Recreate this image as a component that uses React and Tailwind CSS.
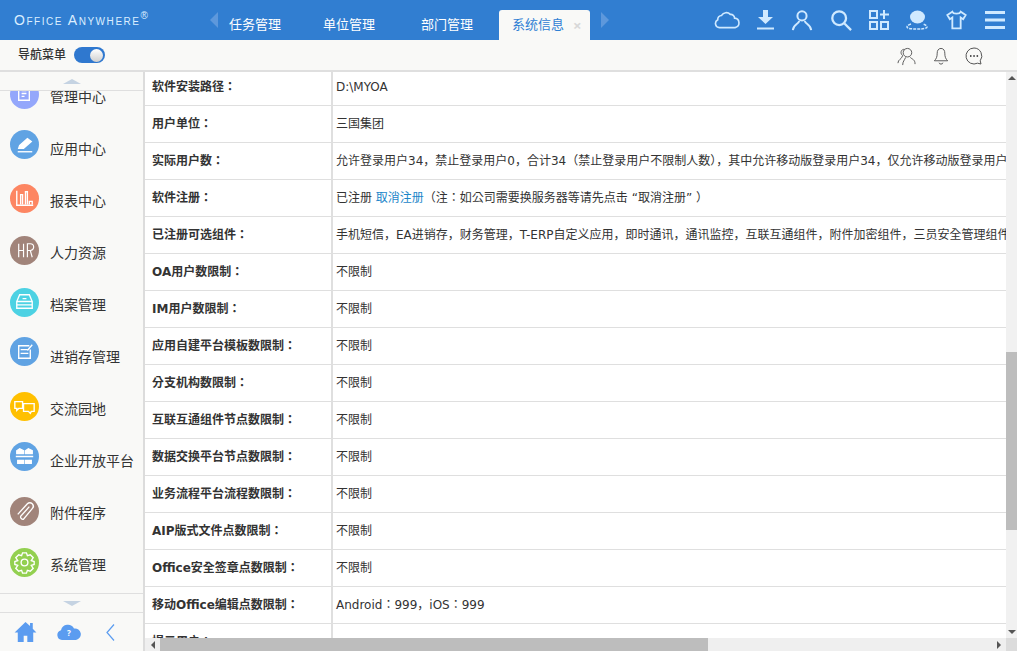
import React from "react";

const ICON = "#cfe9ff";

const rows = [
  ["软件安装路径：", "D:\\MYOA"],
  ["用户单位：", "三国集团"],
  ["实际用户数：", "允许登录用户34，禁止登录用户0，合计34（禁止登录用户不限制人数），其中允许移动版登录用户34，仅允许移动版登录用户0"],
  ["软件注册：", null],
  ["已注册可选组件：", "手机短信，EA进销存，财务管理，T-ERP自定义应用，即时通讯，通讯监控，互联互通组件，附件加密组件，三员安全管理组件"],
  ["OA用户数限制：", "不限制"],
  ["IM用户数限制：", "不限制"],
  ["应用自建平台模板数限制：", "不限制"],
  ["分支机构数限制：", "不限制"],
  ["互联互通组件节点数限制：", "不限制"],
  ["数据交换平台节点数限制：", "不限制"],
  ["业务流程平台流程数限制：", "不限制"],
  ["AIP版式文件点数限制：", "不限制"],
  ["Office安全签章点数限制：", "不限制"],
  ["移动Office编辑点数限制：", "Android：999，iOS：999"],
  ["提示用户：", ""],
];

function TopIcon({ children, className, width = "2" }) {
  return (
    <svg viewBox="0 0 24 24" fill="none" stroke={ICON} strokeWidth={width} className={className}>
      {children}
    </svg>
  );
}

const menu = [
  {
    name: "管理中心",
    bg: "bg-[#94a7fb]",
    shift: "mb-[3px]",
    icon: (
      <>
        <path d="M9 7h11v14H9z" />
        <path d="M12 11h5M12 14h5M12 17h3" />
      </>
    ),
  },
  {
    name: "应用中心",
    bg: "bg-[#60a3e3]",
    shift: "mb-[8px]",
    icon: (
      <>
        <path d="M10 16l8-7 4 3-8 7H9z" fill="#fff" />
        <path d="M8 22.500h15" />
      </>
    ),
  },
  {
    name: "报表中心",
    bg: "bg-[#fd8662]",
    shift: "mb-[3px]",
    icon: <path d="M7 7v15h17M11 21V11h2v10M16 21V8h2v13M20 21v-3h3v3" />,
  },
  {
    name: "人力资源",
    bg: "bg-[#a1847a]",
    shift: "mb-[4px]",
    icon: <path d="M9 8v14M14 8v14M9 15h5M18 22V8h3a3 3 0 0 1 0 7h-3M21 15l2 7" strokeWidth="1.200" />,
  },
  {
    name: "档案管理",
    bg: "bg-[#4dd2e3]",
    shift: "mb-[3px]",
    icon: (
      <>
        <path d="M10 7h10l3 7v7H7v-7z" />
        <path d="M7 14h16M7 17.500h16M13 11h4" />
      </>
    ),
  },
  {
    name: "进销存管理",
    bg: "bg-[#60a3e3]",
    shift: "mb-[10px]",
    icon: <path d="M20 9H9v13h12v-9M11 13h7M11 17h8M18 14l5-6" />,
  },
  {
    name: "交流园地",
    bg: "bg-[#ffc000]",
    shift: "mb-[4px]",
    icon: (
      <>
        <path d="M5 10h8v7H9l-2 2v-2H5z" />
        <path d="M14 12h11v8h-3l-1 2-2-2h-5z" />
      </>
    ),
  },
  {
    name: "企业开放平台",
    bg: "bg-[#60a3e3]",
    shift: "mb-[8px]",
    icon: <path d="M7 9l3-2 4 2v3H7zM16 9l3-2 4 2v3h-7zM6 15h18M8 19h6v3H8zM16 19h6v3h-6z" fill="#fff" />,
  },
  {
    name: "附件程序",
    bg: "bg-[#a1847a]",
    shift: "mb-[2px]",
    icon: <path d="M20 10l-9 10a2.500 2.500 0 0 0 3 3l9-11a3.500 3.500 0 0 0-5-5L8 18" />,
  },
  {
    name: "系统管理",
    bg: "bg-[#93d050]",
    shift: "mb-[4px]",
    icon: (
      <>
        <circle cx="15" cy="15" r="3.500" />
        <path d="M13 5h4l1 3 3-1 3 3-2 3 3 1v3l-3 1 2 3-3 3-3-1-1 3h-4l-1-3-3 1-3-3 2-3-3-1v-3l3-1-2-3 3-3 3 1z" />
      </>
    ),
  },
];

export default function App() {
  return (
    <div className="w-[1017px] h-[651px] overflow-hidden flex flex-col bg-white text-[#333] font-['Noto_Sans','Noto_Sans_CJK_SC',sans-serif]">
      {/* top bar */}
      <header className="h-[40px] shrink-0 bg-[#317ed1] flex items-end text-white">
        <div className="w-[210px] shrink-0 h-full pl-[14px] pt-[10px] flex items-start text-[14px] leading-[20px] tracking-[1.550px] [font-variant:small-caps] text-[#dbeeff] font-['Liberation_Sans',sans-serif]">
          Office Anywhere<span className="text-[10px] leading-[12px]">®</span>
        </div>
        <div className="h-full flex items-center">
          <div className="w-0 h-0 border-y-[8px] border-y-transparent border-r-[8px] border-r-[#5d98dc]" />
        </div>
        <nav className="flex items-end h-full text-[13px]">
          <a className="w-[105px] h-[30px] pl-[11px] flex items-center">任务管理</a>
          <a className="w-[98px] h-[30px] flex items-center">单位管理</a>
          <a className="w-[78px] h-[30px] flex items-center">部门管理</a>
          <a className="w-[91px] h-[30px] pl-[13px] flex items-center bg-[#f9f9f7] rounded-t-[3px] text-[#2f80d4]">
            系统信息
            <span className="ml-[9px] text-[#d8d8d8] font-bold text-[15px] leading-[15px]">×</span>
          </a>
        </nav>
        <div className="h-full flex items-center ml-[11px]">
          <div className="w-0 h-0 border-y-[8px] border-y-transparent border-l-[8px] border-l-[#5d98dc]" />
        </div>
        <div className="flex-1 h-full flex items-center justify-end pr-[12px] gap-[17px]">
          <TopIcon className="w-[26px] h-[26px]" width="1.500">
            <path d="M5 19a3.800 3.800 0 0 1-1.500-7.200 3.500 3.500 0 0 1 3.500-4 5 5 0 0 1 8-1 3.500 3.500 0 0 1 4 3.500 4.400 4.400 0 0 1 .5 8.700z" />
          </TopIcon>
          <svg viewBox="0 0 17 20" fill={ICON} className="w-[17px] h-[20px]">
            <path d="M6 0h5v7h5l-7.500 7L1 7h5zM0 17.500h17V19.500H0z" />
          </svg>
          <TopIcon className="w-[22px] h-[22px]" width="2.200">
            <circle cx="12" cy="7.500" r="5" />
            <path d="M9 13c-1 4-6 3-7 10M15 13c1 4 6 3 7 10" />
          </TopIcon>
          <TopIcon className="w-[22px] h-[22px]" width="2.500">
            <circle cx="10" cy="10" r="7.500" />
            <path d="M15.500 15.500L23 23" />
          </TopIcon>
          <svg viewBox="0 0 20 20" fill={ICON} className="w-[20px] h-[20px]">
            <path fillRule="evenodd" d="M0 0h9v9H0zM2 2v5h5V2zM0 11h9v9H0zM2 13v5h5v-5zM11 11h9v9h-9zM13 13v5h5v-5zM14 0h2v3.500h4v2h-4V9h-2V5.500h-3v-2h3z" />
          </svg>
          <svg viewBox="0 0 22 20" className="w-[22px] h-[20px]">
            <ellipse cx="11.500" cy="7" rx="7.500" ry="6.500" fill={ICON} />
            <path d="M5 14c-3 1-4 2-4 3 0 1.500 4 2 10 2s10-.500 10-2c0-1-1-2-4-3" fill="none" stroke={ICON} strokeWidth="1.500" strokeDasharray="3 1" />
          </svg>
          <TopIcon className="w-[23px] h-[20px]" width="2.200">
            <path d="M7 2L1 6l3 5 3-2v13h10V9l3 2 3-5-6-4c-1 3-9 3-10 0z" />
          </TopIcon>
          <svg viewBox="0 0 20 18" fill={ICON} className="w-[20px] h-[18px]">
            <path d="M0 0h20v3H0zM0 7.500h20v3H0zM0 15h20v3H0z" />
          </svg>
        </div>
      </header>

      {/* sub bar */}
      <div className="h-[32px] shrink-0 bg-[#f9f9f7] border-b-2 border-[#dfdfdf] flex items-center pl-[18px] pr-[34px]">
        <span className="text-[12px] font-medium">导航菜单</span>
        <span className="ml-[8px] w-[31px] h-[16px] rounded-full bg-[#2f78cf] flex items-center justify-end pr-[2px]">
          <span className="w-[13px] h-[13px] rounded-full bg-gradient-to-b from-white to-[#cfcfcf]" />
        </span>
        <div className="flex-1" />
        <div className="flex items-center gap-[17px] mt-[2px]">
          <svg viewBox="0 0 20 20" fill="none" stroke="#555" className="w-[19px] h-[19px]">
            <circle cx="11" cy="6" r="4.500" />
            <path d="M8 2.500C4 2 3 7 6 9c-1 4-5 4-5 8M9 11c-1 3-3 4-3 8M14 11c2 2 5 2 5 7" />
          </svg>
          <svg viewBox="0 0 16 20" fill="none" stroke="#555" className="w-[16px] h-[19px]">
            <path d="M8 1.500c-3 0-4 2.500-4 5 0 4-1 6-3 8h14c-2-2-3-4-3-8 0-2.500-1-5-4-5zM6 16.500c0 2 4 2 4 0" />
          </svg>
          <svg viewBox="0 0 18 18" fill="none" stroke="#555" className="w-[18px] h-[18px] -ml-[1px]">
            <path d="M9 1a8 8 0 1 0 3.500 15.200L16 17l-.8-3.200A8 8 0 0 0 9 1z" />
            <path d="M5 9h1.500M8.300 9h1.500M11.600 9h1.500" strokeWidth="2" />
          </svg>
        </div>
      </div>

      <div className="flex-1 flex min-h-0">
        {/* sidebar */}
        <aside className="w-[145px] shrink-0 bg-[#f9f9f7] border-r-2 border-[#dcdcdc] flex flex-col">
          <div className="h-[19px] shrink-0 border-b border-[#dfdfdf] flex items-center justify-center">
            <div className="w-0 h-0 border-x-[9px] border-x-transparent border-b-[5px] border-b-[#c5d3e2]" />
          </div>
          <div className="flex-1 min-h-0 overflow-hidden">
            <div className="-mt-[21px]">
              {menu.map((m) => (
                <div key={m.name} className="h-[52px] flex items-center pl-[10px] text-[14px] whitespace-nowrap">
                  <span className={`w-[29px] h-[29px] rounded-full shrink-0 ${m.bg} ${m.shift}`}>
                    <svg viewBox="0 0 30 30" fill="none" stroke="#fff" strokeWidth="1.400" className="w-[29px] h-[29px]">
                      {m.icon}
                    </svg>
                  </span>
                  <span className="ml-[11px]">{m.name}</span>
                </div>
              ))}
            </div>
          </div>
          <div className="h-[20px] shrink-0 border-t border-b border-[#dfdfdf] flex items-center justify-center">
            <div className="w-0 h-0 border-x-[9px] border-x-transparent border-t-[5px] border-t-[#c5d3e2]" />
          </div>
          <div className="h-[38px] shrink-0 flex items-center pl-[14px]">
            <svg viewBox="0 0 24 22" fill="#5b9cf0" className="w-[23px] h-[20px]">
              <path d="M12 0l5 4.500V1h3v6.500l4 4h-3.500V22H14v-7h-4v7H3.500V11.500H0z" />
            </svg>
            <svg viewBox="0 0 24 16" className="w-[24px] h-[16px] ml-[20px]">
              <path fill="#5b9cf0" d="M5 16a5 5 0 0 1-1-9.800A7 7 0 0 1 17 4.500 5.800 5.800 0 0 1 19 16z" />
              <text x="12" y="12" fill="#fff" fontSize="8" fontWeight="700" textAnchor="middle">?</text>
            </svg>
            <svg viewBox="0 0 9 17" fill="none" stroke="#5b9cf0" strokeWidth="1.200" className="w-[9px] h-[17px] ml-[25px]">
              <path d="M8 .500L1 8.500l7 8" />
            </svg>
          </div>
        </aside>

        {/* main */}
        <main className="flex-1 min-w-0 flex flex-col">
          <div className="flex-1 min-h-0 flex">
            <div className="flex-1 min-w-0 overflow-hidden">
              <div className="-mt-[3px] text-[12px] font-['DejaVu_Sans','Noto_Sans_CJK_KR','Noto_Sans_CJK_SC',sans-serif]">
                {rows.map(([label, value]) => (
                  <div key={label} className="h-[37px] border-b border-[#dfdfdf] flex items-center">
                    <div className="w-[188px] shrink-0 h-full flex items-center pl-[7px] border-r-2 border-[#dfdfdf] font-bold whitespace-nowrap">
                      {label}
                    </div>
                    <div className="flex-1 px-[3px] whitespace-nowrap overflow-hidden">
                      {value === null ? (
                        <>
                          已注册 <a className="text-[#1b86c9]">取消注册</a>（注：如公司需要换服务器等请先点击 “取消注册” ）
                        </>
                      ) : (
                        value
                      )}
                    </div>
                  </div>
                ))}
              </div>
            </div>
            {/* vertical scrollbar */}
            <div className="w-[11px] shrink-0 bg-[#f1f1f1] flex flex-col items-center">
              <div className="h-[8px] flex items-end shrink-0">
                <div className="w-0 h-0 border-x-[4px] border-x-transparent border-b-[4px] border-b-[#555]" />
              </div>
              <div className="w-full h-[178px] bg-[#bdbdbd] mt-[272px] shrink-0" />
              <div className="flex-1" />
              <div className="h-[8px] shrink-0">
                <div className="w-0 h-0 border-x-[4px] border-x-transparent border-t-[4px] border-t-[#555]" />
              </div>
            </div>
          </div>
          {/* horizontal scrollbar */}
          <div className="h-[13px] shrink-0 flex bg-[#efefef]">
            <div className="w-[15px] shrink-0 flex items-center justify-center">
              <div className="w-0 h-0 border-y-[4px] border-y-transparent border-r-[4px] border-r-[#555]" />
            </div>
            <div className="w-[548px] shrink-0 bg-[#bdbdbd]" />
            <div className="flex-1 flex items-center justify-end pr-[5px]">
              <div className="w-0 h-0 border-y-[4px] border-y-transparent border-l-[4px] border-l-[#555]" />
            </div>
            <div className="w-[11px] shrink-0 bg-[#dcdcdc]" />
          </div>
        </main>
      </div>
    </div>
  );
}
